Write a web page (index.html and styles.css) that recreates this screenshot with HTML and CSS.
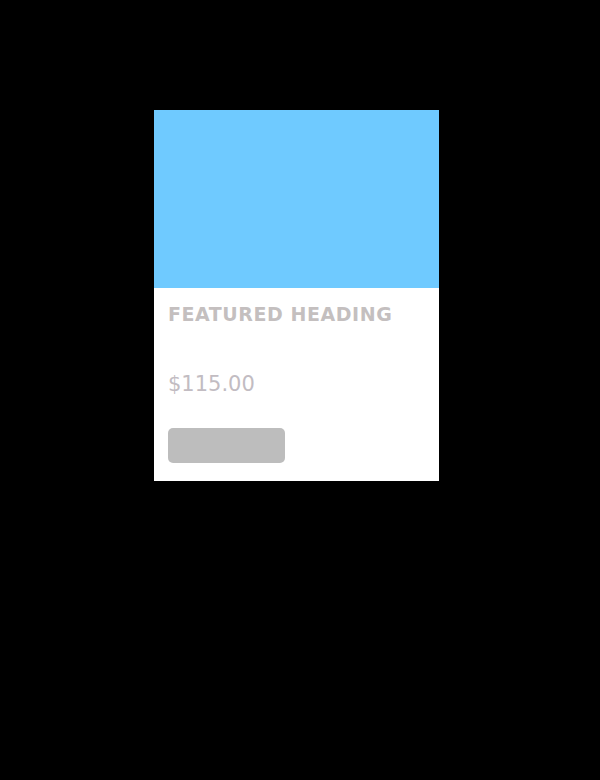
FILE: index.html
```html
<!DOCTYPE html>
<html>
<head>
<meta charset="utf-8">
<link rel="stylesheet" href="styles.css">
</head>
<body>
<div class="page">
  <div class="card">
    <div class="card-media"></div>
    <div class="card-body">
      <h2 class="card-title">FEATURED HEADING</h2>
      <div class="card-price">$115.00</div>
      <div class="card-button"></div>
    </div>
  </div>
</div>
</body>
</html>
```
FILE: styles.css
```css
html, body {
  margin: 0;
  padding: 0;
  background: #000;
}
.page {
  width: 600px;
  height: 780px;
  padding: 110px 0 0 154px;
  box-sizing: border-box;
}
.card {
  width: 285px;
  background: #fff;
}
.card-media {
  height: 178px;
  background: #6fcaff;
}
.card-body {
  padding: 14px 14px 18px 14px;
  display: flex;
  flex-direction: column;
  align-items: flex-start;
}
.card-title {
  margin: 0;
  font-family: "DejaVu Sans", "Liberation Sans", sans-serif;
  font-weight: 700;
  font-size: 19px;
  line-height: 24px;
  color: #c4bfbf;
  letter-spacing: 0.55px;
}
.card-price {
  margin-top: 44px;
  font-family: "DejaVu Sans", "Liberation Sans", sans-serif;
  font-size: 21px;
  line-height: 28px;
  color: #c2bcc2;
}
.card-button {
  margin-top: 30px;
  width: 117px;
  height: 35px;
  border-radius: 5px;
  background: #bdbdbd;
}
```
